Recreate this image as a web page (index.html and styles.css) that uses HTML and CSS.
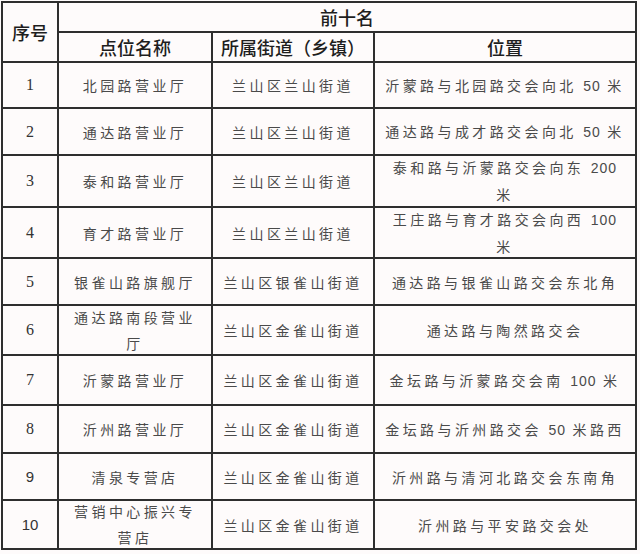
FILE: index.html
```html
<!DOCTYPE html>
<html lang="zh">
<head>
<meta charset="utf-8">
<title>前十名</title>
<link rel="stylesheet" href="styles.css">
</head>
<body>
<table class="rank">
  <colgroup>
    <col class="c-no">
    <col class="c-name">
    <col class="c-street">
    <col class="c-pos">
  </colgroup>
  <thead>
    <tr class="h1">
      <th rowspan="2" class="hd">序号</th>
      <th colspan="3" class="hd">前十名</th>
    </tr>
    <tr class="h2">
      <th class="hd">点位名称</th>
      <th class="hd">所属街道（乡镇）</th>
      <th class="hd">位置</th>
    </tr>
  </thead>
  <tbody>
    <tr class="r1"><td class="num serif">1</td><td>北园路营业厅</td><td>兰山区兰山街道</td><td>沂蒙路与北园路交会向北 <span class="dg">50</span> 米</td></tr>
    <tr class="r2"><td class="num serif">2</td><td>通达路营业厅</td><td>兰山区兰山街道</td><td>通达路与成才路交会向北 <span class="dg">50</span> 米</td></tr>
    <tr class="r3"><td class="num serif">3</td><td>泰和路营业厅</td><td>兰山区兰山街道</td><td><div class="two">泰和路与沂蒙路交会向东 <span class="dg">200</span><br>米</div></td></tr>
    <tr class="r4"><td class="num serif">4</td><td>育才路营业厅</td><td>兰山区兰山街道</td><td><div class="two">王庄路与育才路交会向西 <span class="dg">100</span><br>米</div></td></tr>
    <tr class="r5"><td class="num serif">5</td><td>银雀山路旗舰厅</td><td>兰山区银雀山街道</td><td>通达路与银雀山路交会东北角</td></tr>
    <tr class="r6"><td class="num serif">6</td><td><div class="two">通达路南段营业<br>厅</div></td><td>兰山区金雀山街道</td><td>通达路与陶然路交会</td></tr>
    <tr class="r7"><td class="num serif">7</td><td>沂蒙路营业厅</td><td>兰山区金雀山街道</td><td>金坛路与沂蒙路交会南 <span class="dg">100</span> 米</td></tr>
    <tr class="r8"><td class="num serif">8</td><td>沂州路营业厅</td><td>兰山区金雀山街道</td><td>金坛路与沂州路交会 <span class="dg">50</span> 米路西</td></tr>
    <tr class="r9"><td class="num">9</td><td>清泉专营店</td><td>兰山区金雀山街道</td><td>沂州路与清河北路交会东南角</td></tr>
    <tr class="r10"><td class="num">10</td><td><div class="two">营销中心振兴专<br>营店</div></td><td>兰山区金雀山街道</td><td>沂州路与平安路交会处</td></tr>
  </tbody>
</table>
</body>
</html>
```

FILE: styles.css
```css
html, body {
  margin: 0;
  padding: 0;
  background: #fefbfb;
}
body {
  padding: 1px 0 0 1px;
}
.rank {
  border-collapse: collapse;
  table-layout: fixed;
  width: 636px;
  font-family: "Noto Sans CJK SC", "Noto Sans", sans-serif;
  color: #4a4a4a;
}
.c-no { width: 56px; }
.c-name { width: 154px; }
.c-street { width: 162px; }
.c-pos { width: 262px; }
.rank th, .rank td {
  border: 2px solid #2e2e2e;
  padding: 0;
  text-align: center;
  vertical-align: middle;
  white-space: nowrap;
  overflow: hidden;
}
.rank th {
  font-size: 18px;
  font-weight: 500;
  color: #1e1e1e;
  line-height: 22px;
}
.rank td {
  font-size: 14px;
  letter-spacing: 3.4px;
  line-height: 22px;
  font-weight: 400;
}
.rank td .two {
  line-height: 26px;
  margin: -4px 0 -3px;
}
.rank td.num {
  font-family: "Liberation Sans", sans-serif;
  font-size: 15px;
  letter-spacing: 0;
  color: #333;
}
.rank td.num.serif {
  font-family: "Liberation Serif", serif;
  font-size: 16px;
}
.dg {
  font-family: "Liberation Sans", sans-serif;
  letter-spacing: 1px;
}
.h1 { height: 30px; }
.h2 { height: 30px; }
.r1 { height: 46px; }
.r2 { height: 47px; }
.r3 { height: 52px; }
.r4 { height: 51px; }
.r5 { height: 47px; }
.r6 { height: 50px; }
.r7 { height: 50px; }
.r8 { height: 48px; }
.r9 { height: 47px; }
.r10 { height: 49px; }
```
